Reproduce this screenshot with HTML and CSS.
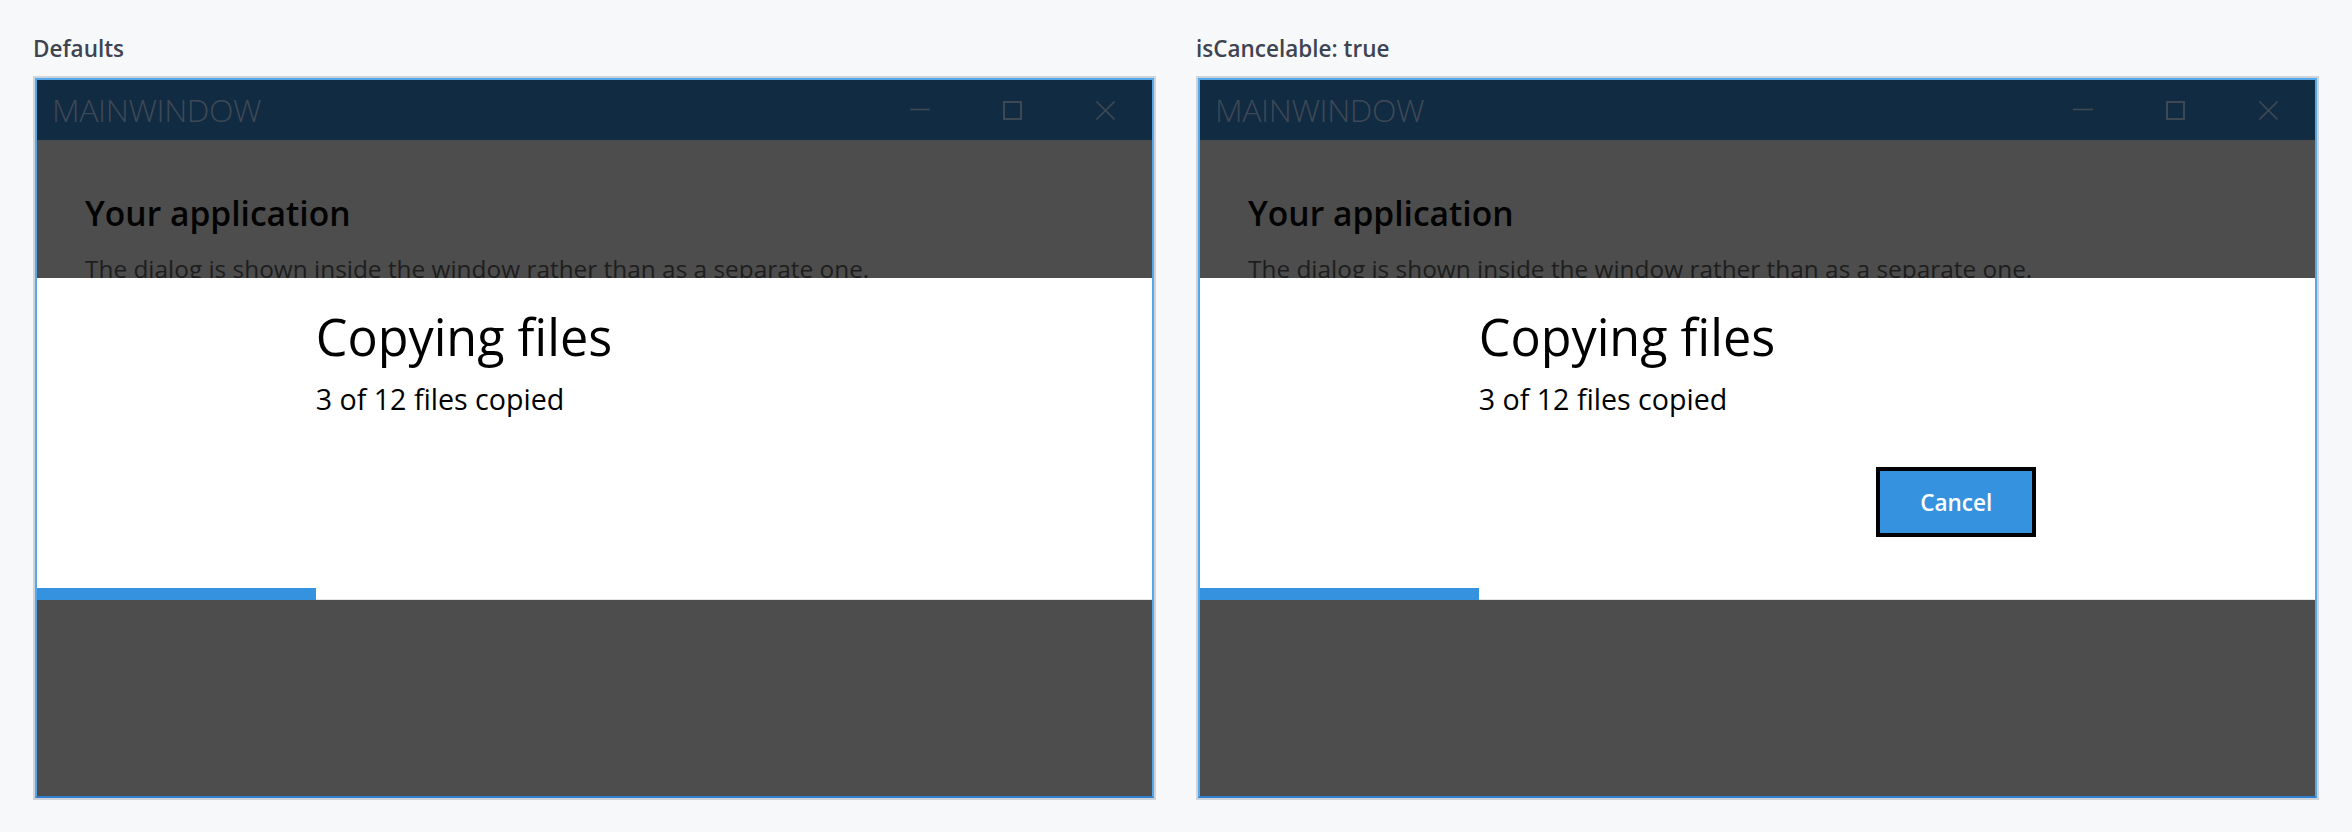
FILE: index.html
```html
<!DOCTYPE html>
<html lang="en">
<head>
<meta charset="utf-8">
<title>Progress dialog</title>
<link rel="stylesheet" href="styles.css">
</head>
<body>
<div class="grid">
  <section class="demo">
    <div class="label">Defaults</div>
    <div class="frame">
      <div class="win">
        <div class="titlebar">
          <span class="title">MAINWINDOW</span>
          <div class="controls">
            <span class="ctl"><svg width="20" height="20" viewBox="0 0 20 20"><line x1="0" y1="9.5" x2="20" y2="9.5"/></svg></span>
            <span class="ctl"><svg width="19" height="19" viewBox="0 0 19 19"><rect x="1" y="1" width="17" height="17"/></svg></span>
            <span class="ctl"><svg width="19" height="19" viewBox="0 0 19 19"><line x1="0.5" y1="0.5" x2="18.5" y2="18.5"/><line x1="18.5" y1="0.5" x2="0.5" y2="18.5"/></svg></span>
          </div>
        </div>
        <div class="content">
          <h1 class="app-title">Your application</h1>
          <p class="app-text">The dialog is shown inside the window rather than as a separate one.</p>
          <div class="dialog">
            <div class="dlg-body">
              <div class="dlg-title">Copying files</div>
              <div class="dlg-sub">3 of 12 files copied</div>
            </div>
            <div class="progress"><div class="fill" style="width:25%"></div></div>
          </div>
        </div>
      </div>
    </div>
  </section>
  <section class="demo">
    <div class="label">isCancelable: true</div>
    <div class="frame">
      <div class="win">
        <div class="titlebar">
          <span class="title">MAINWINDOW</span>
          <div class="controls">
            <span class="ctl"><svg width="20" height="20" viewBox="0 0 20 20"><line x1="0" y1="9.5" x2="20" y2="9.5"/></svg></span>
            <span class="ctl"><svg width="19" height="19" viewBox="0 0 19 19"><rect x="1" y="1" width="17" height="17"/></svg></span>
            <span class="ctl"><svg width="19" height="19" viewBox="0 0 19 19"><line x1="0.5" y1="0.5" x2="18.5" y2="18.5"/><line x1="18.5" y1="0.5" x2="0.5" y2="18.5"/></svg></span>
          </div>
        </div>
        <div class="content">
          <h1 class="app-title">Your application</h1>
          <p class="app-text">The dialog is shown inside the window rather than as a separate one.</p>
          <div class="dialog">
            <div class="dlg-body">
              <div class="dlg-title">Copying files</div>
              <div class="dlg-sub">3 of 12 files copied</div>
              <div class="actions"><button class="btn" type="button">Cancel</button></div>
            </div>
            <div class="progress"><div class="fill" style="width:25%"></div></div>
          </div>
        </div>
      </div>
    </div>
  </section>
</div>
</body>
</html>
```

FILE: styles.css
```css
html, body {
  margin: 0;
  padding: 0;
  background: #f7f8fa;
}
body {
  font-family: "Open Sans", "Noto Sans", "Liberation Sans", sans-serif;
  width: 2352px;
  height: 832px;
  overflow: hidden;
}
.grid {
  display: grid;
  grid-template-columns: 1fr 1fr;
  column-gap: 40px;
  padding: 34px 33px 0 33px;
}
.label {
  font-size: 22.5px;
  line-height: 30px;
  font-weight: 600;
  color: #3e4451;
  margin-bottom: 12px;
}
.frame {
  border: 2px solid #cfd4da;
  height: 720px;
}
.win {
  border: 2px solid #56a6ea;
  border-bottom-color: #2f7fcb;
  height: 716px;
  display: flex;
  flex-direction: column;
}
.titlebar {
  height: 60px;
  flex: none;
  background: #112b42;
  display: flex;
  align-items: center;
  padding-left: 15px;
}
.title {
  font-size: 32px;
  font-weight: 300;
  letter-spacing: -0.4px;
  line-height: 60px;
  color: #3f4955;
}
.controls {
  margin-left: auto;
  display: flex;
  height: 60px;
}
.ctl {
  width: 93px;
  height: 60px;
  display: flex;
  align-items: center;
  justify-content: center;
}
.ctl svg {
  fill: none;
  stroke: #3d4853;
  stroke-width: 1.6;
}
.ctl svg rect {
  stroke-width: 2;
}
.content {
  position: relative;
  flex: 1;
  background: #4d4d4d;
  padding: 50px 48px 0 48px;
  overflow: hidden;
}
.app-title {
  margin: 0;
  font-size: 33.6px;
  line-height: 46px;
  font-weight: 600;
  color: #030303;
}
.app-text {
  margin: 17px 0 0 0;
  font-size: 24.4px;
  line-height: 32px;
  color: #1e1e1e;
  white-space: nowrap;
}
.dialog {
  position: absolute;
  top: 138px;
  left: 0;
  right: 0;
  height: 322px;
  background: #ffffff;
  display: flex;
  flex-direction: column;
  padding-top: 29px;
  box-sizing: border-box;
}
.dlg-body {
  margin: 0 25%;
}
.dlg-title {
  font-size: 50.3px;
  line-height: 60px;
  color: #000;
}
.dlg-sub {
  margin-top: 14px;
  font-size: 28.6px;
  line-height: 36px;
  color: #000;
}
.actions {
  display: flex;
  justify-content: flex-end;
  margin-top: 50px;
}
.btn {
  width: 160px;
  height: 70px;
  box-sizing: border-box;
  border: 4px solid #000;
  background: #3592de;
  color: #fff;
  font-family: "Open Sans", "Noto Sans", "Liberation Sans", sans-serif;
  font-size: 22.5px;
  font-weight: 600;
  padding: 0;
}
.progress {
  margin-top: auto;
  height: 12px;
  background: linear-gradient(to bottom, transparent 11px, #e4e4e4 11px);
}
.fill {
  height: 100%;
  background: #3592de;
}
```
